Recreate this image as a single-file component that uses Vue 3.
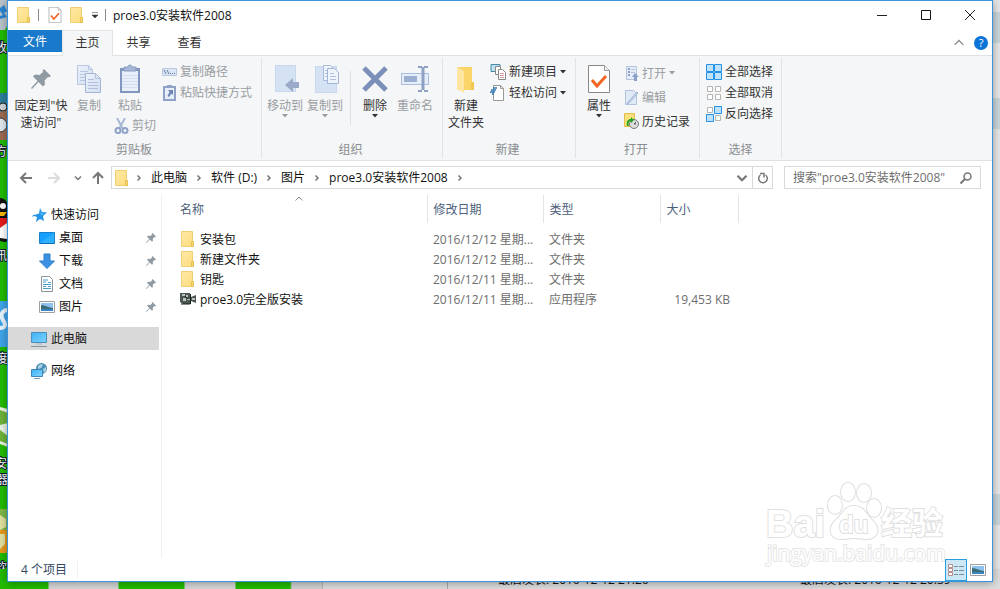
<script setup>
import { ref } from 'vue';

const tabs = ['主页', '共享', '查看'];
const activeTab = ref('主页');
const keyword = ref('');
const selectedNav = ref('此电脑');

const crumbs = ['此电脑', '软件 (D:)', '图片', 'proe3.0安装软件2008'];

const quickItems = [
  { label: '桌面', icon: 'desktop' },
  { label: '下载', icon: 'download' },
  { label: '文档', icon: 'document' },
  { label: '图片', icon: 'picture' }
];

const rootItems = [
  { label: '此电脑', icon: 'computer' },
  { label: '网络', icon: 'network' }
];

const files = [
  { name: '安装包', date: '2016/12/12 星期一 20:11', type: '文件夹', size: '', icon: 'folder' },
  { name: '新建文件夹', date: '2016/12/12 星期一 20:15', type: '文件夹', size: '', icon: 'folder' },
  { name: '钥匙', date: '2016/12/11 星期日 19:40', type: '文件夹', size: '', icon: 'folder' },
  { name: 'proe3.0完全版安装', date: '2016/12/11 星期日 19:52', type: '应用程序', size: '19,453 KB', icon: 'app' }
];
</script>

<template>
  <div class="desktop">
    <!-- 图标库 -->
    <svg class="sprite" width="0" height="0" aria-hidden="true">
      <defs>
        <linearGradient id="g-folder" x1="0" y1="0" x2="1" y2="1">
          <stop offset="0" stop-color="#ffe9a6" />
          <stop offset="1" stop-color="#fcdc7c" />
        </linearGradient>
        <linearGradient id="g-screen" x1="0" y1="0" x2="1" y2="1">
          <stop offset="0" stop-color="#3fb0f5" />
          <stop offset="1" stop-color="#7dd4ff" />
        </linearGradient>
        <linearGradient id="g-page" x1="0" y1="0" x2="1" y2="1">
          <stop offset="0" stop-color="#eaf1fa" />
          <stop offset="1" stop-color="#d3dff0" />
        </linearGradient>
      </defs>
      <symbol id="i-folder" viewBox="0 0 16 16">
        <path d="M1.500.5h11v10h1v5h-12z" fill="url(#g-folder)" stroke="#efcf72" />
        <path d="M11.500 15.500v-5h2v5z" fill="#f8d774" stroke="#e6c052" />
      </symbol>
      <symbol id="i-check" viewBox="0 0 22 28">
        <path d="M.5.5h16l5 5v22H.5z" fill="#fff" stroke="#888" />
        <path d="M16.500.5v5h5" fill="#eee" stroke="#999" />
        <path d="M4 15l5 6 9-10" fill="none" stroke="#f26522" stroke-width="3" />
      </symbol>
      <symbol id="i-pin" viewBox="0 0 20 20">
        <path d="M13 0l7 7-1.500 1.300-1.500-.3-3.500 3.500.5 4-2 2-4.500-4.500L1 20l-1-1 6.500-7L2 7.500l2-2 4.500.5L12 3l-.5-1.500z" fill="#8f9aa3" />
      </symbol>
      <symbol id="i-desktop" viewBox="0 0 16 16">
        <path d="M.5 2.500h15v11H.5z" fill="#16a0ff" stroke="#1b80cc" />
        <path d="M1 13L15 3v10z" fill="#2fb0ff" />
        <path d="M1 13.500h14" stroke="#0f6bb3" />
      </symbol>
      <symbol id="i-download" viewBox="0 0 16 16">
        <path d="M5 1h6v7h4.500L8 15.500.5 8H5z" fill="#3c92e2" stroke="#2c7ccb" />
      </symbol>
      <symbol id="i-document" viewBox="0 0 16 16">
        <path d="M2.500.5h8l3 3v12h-11z" fill="#fff" stroke="#8c959c" />
        <path d="M4 4h5M4 6h3M9 6.500h3M4 8.500h8M4 10.500h3M9 10.500h3M4 12.500h8" stroke="#4a9dc9" />
      </symbol>
      <symbol id="i-picture" viewBox="0 0 16 16">
        <path d="M.5 2.500h15v11H.5z" fill="#fff" stroke="#9a9fa4" />
        <path d="M2 4h12v8H2z" fill="#8fc1ef" />
        <path d="M2 6c4 0 8 3 12 3v3H2z" fill="#3c6c73" />
        <path d="M2 10h12v2H2z" fill="#3b84c4" />
      </symbol>
      <symbol id="i-computer" viewBox="0 0 16 16">
        <path d="M.5 1.500h15v10H.5z" fill="url(#g-screen)" stroke="#4a8fbd" />
        <path d="M5 13h6" stroke="#9fb5c4" />
        <path d="M0 15.500h16" stroke="#8197a8" />
      </symbol>
      <symbol id="i-network" viewBox="0 0 16 16">
        <circle cx="10.500" cy="5.500" r="5.500" fill="#4b8fb5" />
        <path d="M7 3c2-2 4-2 5-1l-2 3-3 1zM12 6l3-2v4l-2 2z" fill="#a9d3e4" />
        <path d="M.5 6.500h11v7H.5z" fill="url(#g-screen)" stroke="#3d86b5" />
        <path d="M3 15.500h6" stroke="#7d98a8" />
      </symbol>
      <symbol id="i-app" viewBox="0 0 16 16">
        <path d="M0 2h10v3l1-1v2l5-2v8l-5-2v3H3l-3-2z" fill="#4d5650" />
        <path d="M2 3h3v2H2zM6 4h2v2H6zM3 7h3v3H3zM7 8h3v1H7zM12 7h3v2h-3z" fill="#b7c4b9" />
        <path d="M1 13h9M10.500 3v10M5 5l3 3" stroke="#16201a" />
      </symbol>
      <symbol id="i-copy" viewBox="0 0 24 28">
        <path d="M.5.5h11l4 4v15H.5z" fill="url(#g-page)" stroke="#b9c7e1" />
        <path d="M11.500.5v4h4M3 6.500h8M3 9.500h9M3 12.500h5M3 15.500h5" fill="none" stroke="#b9c7e1" />
        <path d="M8.500 8.500h10l5 5v14h-15z" fill="url(#g-page)" stroke="#a3b5d6" />
        <path d="M18.500 8.500v5h5M11 14.500h6M11 17.500h10M11 20.500h10M11 23.500h10" fill="none" stroke="#b0c0de" />
      </symbol>
      <symbol id="i-paste" viewBox="0 0 22 30">
        <path d="M1 4h20v25H1z" fill="#8296bf" />
        <path d="M3 7h16v20H3z" fill="#e8eff9" />
        <path d="M3 11.500h16M3 14.500h16M3 17.500h16M3 20.500h16M3 23.500h16" stroke="#d3dff0" />
        <path d="M5 3h4a2 2 0 0 1 4 0h4v4H5z" fill="#a7b8d6" stroke="#899cc3" />
      </symbol>
      <symbol id="i-cut" viewBox="0 0 16 16">
        <path d="M4 0l6 11M12 0L6 11" stroke="#a9b8d2" stroke-width="2" />
        <circle cx="5" cy="12.500" r="2.500" fill="none" stroke="#8ea3c9" stroke-width="2" />
        <circle cx="12" cy="12.500" r="2.500" fill="none" stroke="#8ea3c9" stroke-width="2" />
      </symbol>
      <symbol id="i-path" viewBox="0 0 16 16">
        <path d="M1.500 4.500h14v7h-14z" fill="#dbe6f4" stroke="#b9c8df" />
        <path d="M3 6l2 4M6 6l2 4M9 9.500h1M11 9.500h1M13 9.500h1" stroke="#6478a3" />
      </symbol>
      <symbol id="i-shortcut" viewBox="0 0 16 16">
        <path d="M3 2h11v13H3z" fill="#e6eef8" stroke="#8fa1c6" stroke-width="2" />
        <path d="M6 0h5v3H6z" fill="#8fa1c4" />
        <path d="M7 5h5v5l-1.500-1.500L8 12l-1.500-1 2-4z" fill="#6c83b4" />
      </symbol>
      <symbol id="i-move" viewBox="0 0 28 28">
        <path d="M4 0h21v27H4z" fill="#c9d8ee" />
        <path d="M5 1h19v25H5z" fill="#d5e2f3" />
        <path d="M14 20l8-7v4h6v6h-6v4z" fill="#9aabc9" />
      </symbol>
      <symbol id="i-copyto" viewBox="0 0 28 28">
        <path d="M4 1h22v27H4z" fill="#c9d8ee" />
        <path d="M5 2h20v25H5z" fill="#d5e2f3" />
        <path d="M12.500.5h7l3 3v12h-10z" fill="#eef4fb" stroke="#a9badb" />
        <path d="M16.500 3.500h7l4 4v11h-11z" fill="#eef4fb" stroke="#a3b5d6" />
        <path d="M14 5.500h2M14 8.500h2M14 11.500h2M19 8.500h4M19 11.500h6M19 14.500h6" stroke="#b0c0de" />
      </symbol>
      <symbol id="i-delete" viewBox="0 0 26 26">
        <path d="M2 2l22 22M24 2L2 24" stroke="#7a90b8" stroke-width="5" />
      </symbol>
      <symbol id="i-rename" viewBox="0 0 28 28">
        <path d="M.5 8.500h27v11H.5z" fill="#e6eefa" stroke="#a9bcdc" />
        <path d="M3 11h13v6H3z" fill="#9aafd2" />
        <path d="M22 2v23" stroke="#8ea1c5" stroke-width="3" />
        <path d="M17 2h4M23 2h4M17 26h4M23 26h4" stroke="#8ea1c5" stroke-width="2" />
      </symbol>
      <symbol id="i-newfolder" viewBox="0 0 20 28">
        <path d="M1 2h15v16h1v7H1z" fill="#f9d56a" />
        <path d="M15 17h3v8h-3z" fill="#f3c64f" />
        <path d="M1 2l7 4v22l-7-4z" fill="#ffe7a3" />
      </symbol>
      <symbol id="i-newitem" viewBox="0 0 16 16">
        <path d="M1 .5h9v7H1z" fill="#bfe1f0" stroke="#4788a5" />
        <path d="M5.500 2.500h5v8h-5z" fill="#fff" stroke="#888" />
        <path d="M8.500 5.500h4l3 3v7h-7z" fill="#fff" stroke="#888" />
        <path d="M10 9.500h4M10 11.500h4M10 13.500h4" stroke="#d59a9a" />
      </symbol>
      <symbol id="i-access" viewBox="0 0 16 16">
        <path d="M3.500.5h7l3 3v12h-10z" fill="#fff" stroke="#999" />
        <path d="M10.500.5v3h3" fill="none" stroke="#999" />
        <path d="M3 3h4M1 5h5M0 7h5M2 9h2" stroke="#2f78b5" stroke-width="1.500" />
      </symbol>
      <symbol id="i-open" viewBox="0 0 16 16">
        <path d="M3.500 1.500h10v13h-10z" fill="#e6edf8" stroke="#b3c2dd" />
        <path d="M5 4h2M5 7h2M5 10h2" stroke="#8ba0c8" stroke-width="2" />
        <path d="M8 4.500h4M8 7.500h4" stroke="#b3c2dd" />
        <path d="M12 8l4 4h-2v4h-3v-4H9z" fill="#8ba0c8" />
      </symbol>
      <symbol id="i-edit" viewBox="0 0 16 16">
        <path d="M2.500 1.500h8l3 3v11h-11z" fill="#e0e9f6" stroke="#b3c2dd" />
        <path d="M15 4L6 14l-2 1 1-2 9-10z" fill="#cad8ec" stroke="#a3b5d6" />
      </symbol>
      <symbol id="i-history" viewBox="0 0 16 16">
        <path d="M1.500.5h10v13h-10z" fill="#fbe17e" stroke="#e3bf4a" />
        <circle cx="11" cy="11" r="4.500" fill="#ddd" stroke="#777" />
        <path d="M11 11l2-2M11 11h2" stroke="#555" />
        <path d="M4 13c-1-5 1-7 4-7V4l3 3-3 3V8c-2 0-3 2-2 5z" fill="#21a421" />
      </symbol>
      <symbol id="i-all" viewBox="0 0 16 16">
        <path d="M.5.5h7v7h-7zM8.500.5h7v7h-7zM.5 8.500h7v7h-7zM8.500 8.500h7v7h-7z" fill="#bfe2fb" stroke="#2491e6" />
      </symbol>
      <symbol id="i-none" viewBox="0 0 16 16">
        <path d="M1.500 1.500h5v5h-5zM9.500 1.500h5v5h-5zM1.500 9.500h5v5h-5zM9.500 9.500h5v5h-5z" fill="#fff" stroke="#b5b5b5" />
      </symbol>
      <symbol id="i-invert" viewBox="0 0 16 16">
        <path d="M1.500 1.500h5v5h-5zM9.500 9.500h5v5h-5z" fill="#fff" stroke="#b5b5b5" />
        <path d="M8.500.5h7v7h-7zM.5 8.500h7v7h-7z" fill="#bfe2fb" stroke="#2491e6" />
      </symbol>
      <symbol id="i-chevron" viewBox="0 0 8 8">
        <path d="M2.500 1.500l2.500 2.500-2.500 2.500" fill="none" stroke="#777" stroke-width="1.500" />
      </symbol>
      <symbol id="i-down" viewBox="0 0 8 8">
        <path d="M1 2.500l3 3 3-3" fill="none" stroke="#777" stroke-width="1.500" />
      </symbol>
      <symbol id="i-up" viewBox="0 0 8 8">
        <path d="M.5 5.500L4 2l3.500 3.500" fill="none" stroke="#8a8a8a" />
      </symbol>
      <symbol id="i-tri" viewBox="0 0 6 4">
        <path d="M0 0h6L3 3.500z" fill="currentColor" />
      </symbol>
    </svg>

    <!-- 窗口后面露出的桌面 -->
    <svg class="icons-behind" width="8" height="589" aria-hidden="true">
      <path d="M0 0h8v24l-3 6H0z" fill="#b9c3c9" />
      <path d="M0 8l4-3 3 6-3 2 3 4-7 2v-3l3-1-3-4z" fill="#2b87d2" />
      <path d="M0 93h8v47H0z" fill="#2c7f99" />
      <path d="M0 112l8-4v32H0z" fill="#9c6b52" />
      <circle cx="3" cy="107" r="4" fill="#cfd6da" stroke="#222" />
      <circle cx="0" cy="125" r="7" fill="#dfe8ee" stroke="#333" />
      <path d="M0 198c5 0 8 4 8 9v34c-4 2-6 0-8 0z" fill="#111" />
      <circle cx="3" cy="206" r="3" fill="#fff" />
      <path d="M0 212h7l-3 4H0z" fill="#f4b400" />
      <path d="M0 218h8v10H0z" fill="#e31b1b" />
      <path d="M0 228l7-5v16l-7-1z" fill="#fff" />
      <path d="M0 301h8v46H0z" fill="#3fa5e8" />
      <path d="M8 310c-6 0-8 5-5 10 3 4 3 8-3 8" fill="none" stroke="#e8f4fc" stroke-width="4" />
      <path d="M0 407l8 2v38l-8-3z" fill="#e9f3e4" />
      <path d="M0 410l8 3v10l-8 2zM0 430l8 6v8l-8-3z" fill="#6db33a" />
      <path d="M0 509h8v21H0z" fill="#7cb648" />
      <path d="M0 530h8v23H0z" fill="#e69a1c" />
      <path d="M0 515l6 4v8l-6 3zM0 534h5v10l-5 5z" fill="#dfe0a0" />
      <g class="behind-label">
        <text x="-5" y="52">收</text>
        <text x="-5" y="156">方</text>
        <text x="-5" y="260">讯</text>
        <text x="-4" y="363">度</text>
        <text x="-5" y="468">安</text>
        <text x="-4" y="484">器</text>
        <text x="-5" y="572">软件</text>
      </g>
    </svg>
    <div class="page-behind"></div>
    <div class="bottom-behind">
      <span>最后发表: 2016-12-12 21:26</span>
      <span>最后发表: 2016-12-12 20:39</span>
    </div>

    <main class="window">
      <header class="titlebar">
        <div class="quickbar">
          <svg class="ic16"><use href="#i-folder" /></svg>
          <i class="bar"></i>
          <button class="plain" aria-label="属性"><svg class="ic16"><use href="#i-check" /></svg></button>
          <button class="plain" aria-label="新建文件夹"><svg class="ic16"><use href="#i-folder" /></svg></button>
          <button class="plain custom" aria-label="自定义快速访问工具栏">
            <svg width="8" height="8"><path d="M1 1.500h6M1 4h6L4 7z" fill="#333" stroke="#333" stroke-width=".5" /></svg>
          </button>
          <i class="bar"></i>
        </div>
        <h1>proe3.0安装软件2008</h1>
        <div class="controls">
          <button class="plain" aria-label="最小化"><svg width="12" height="12"><path d="M1 6.500h10" stroke="#222" /></svg></button>
          <button class="plain" aria-label="最大化"><svg width="12" height="12"><path d="M1.500 1.500h9v9h-9z" fill="none" stroke="#111" /></svg></button>
          <button class="plain" aria-label="关闭"><svg width="12" height="12"><path d="M1 1l10 10M11 1L1 11" stroke="#222" /></svg></button>
        </div>
      </header>

      <nav class="tabs">
        <button class="file-tab">文件</button>
        <button
          v-for="tab in tabs"
          :key="tab"
          class="tab"
          :class="{ active: activeTab === tab }"
          @click="activeTab = tab"
        >{{ tab }}</button>
        <div class="tabs-right">
          <button class="plain" aria-label="最小化功能区"><svg width="10" height="10"><use href="#i-up" /></svg></button>
          <button class="help" aria-label="帮助">?</button>
        </div>
      </nav>

      <section class="ribbon">
        <div class="group clipboard">
          <div class="group-body">
            <button class="big pin-big">
              <span class="big-icon"><svg width="20" height="20"><use href="#i-pin" /></svg></span>
              <span>固定到"快<br>速访问"</span>
            </button>
            <button class="big copy-big off">
              <span class="big-icon"><svg width="24" height="28"><use href="#i-copy" /></svg></span>
              <span>复制</span>
            </button>
            <div class="paste-col">
              <button class="big off">
                <span class="big-icon"><svg width="22" height="30"><use href="#i-paste" /></svg></span>
                <span>粘贴</span>
              </button>
              <button class="small off cut"><svg class="ic16"><use href="#i-cut" /></svg>剪切</button>
            </div>
            <div class="smalls">
              <button class="small off"><svg class="ic16"><use href="#i-path" /></svg>复制路径</button>
              <button class="small off"><svg class="ic16"><use href="#i-shortcut" /></svg>粘贴快捷方式</button>
            </div>
          </div>
          <div class="group-name">剪贴板</div>
        </div>

        <div class="group organize">
          <div class="group-body">
            <button class="big off">
              <span class="big-icon"><svg width="28" height="28"><use href="#i-move" /></svg></span>
              <span>移动到</span>
              <svg class="tri"><use href="#i-tri" /></svg>
            </button>
            <button class="big off">
              <span class="big-icon"><svg width="28" height="28"><use href="#i-copyto" /></svg></span>
              <span>复制到</span>
              <svg class="tri"><use href="#i-tri" /></svg>
            </button>
            <i class="divider"></i>
            <button class="big">
              <span class="big-icon"><svg width="26" height="26"><use href="#i-delete" /></svg></span>
              <span>删除</span>
              <svg class="tri"><use href="#i-tri" /></svg>
            </button>
            <button class="big off">
              <span class="big-icon"><svg width="28" height="28"><use href="#i-rename" /></svg></span>
              <span>重命名</span>
            </button>
          </div>
          <div class="group-name">组织</div>
        </div>

        <div class="group create">
          <div class="group-body">
            <button class="big">
              <span class="big-icon"><svg width="20" height="28"><use href="#i-newfolder" /></svg></span>
              <span>新建<br>文件夹</span>
            </button>
            <div class="smalls">
              <button class="small"><svg class="ic16"><use href="#i-newitem" /></svg>新建项目<svg class="tri"><use href="#i-tri" /></svg></button>
              <button class="small"><svg class="ic16"><use href="#i-access" /></svg>轻松访问<svg class="tri"><use href="#i-tri" /></svg></button>
            </div>
          </div>
          <div class="group-name">新建</div>
        </div>

        <div class="group open">
          <div class="group-body">
            <button class="big">
              <span class="big-icon"><svg width="22" height="28"><use href="#i-check" /></svg></span>
              <span>属性</span>
              <svg class="tri"><use href="#i-tri" /></svg>
            </button>
            <div class="smalls loose">
              <button class="small off"><svg class="ic16"><use href="#i-open" /></svg>打开<svg class="tri"><use href="#i-tri" /></svg></button>
              <button class="small off"><svg class="ic16"><use href="#i-edit" /></svg>编辑</button>
              <button class="small"><svg class="ic16"><use href="#i-history" /></svg>历史记录</button>
            </div>
          </div>
          <div class="group-name">打开</div>
        </div>

        <div class="group select">
          <div class="group-body">
            <div class="smalls">
              <button class="small"><svg class="ic16"><use href="#i-all" /></svg>全部选择</button>
              <button class="small"><svg class="ic16"><use href="#i-none" /></svg>全部取消</button>
              <button class="small"><svg class="ic16"><use href="#i-invert" /></svg>反向选择</button>
            </div>
          </div>
          <div class="group-name">选择</div>
        </div>
      </section>

      <div class="addressbar">
        <button class="plain nav-btn" aria-label="后退">
          <svg width="14" height="14"><path d="M13 7H2M7 2L2 7l5 5" fill="none" stroke="#777" stroke-width="2" /></svg>
        </button>
        <button class="plain nav-btn" aria-label="前进">
          <svg width="14" height="14"><path d="M1 7h11M7 2l5 5-5 5" fill="none" stroke="#dcdcdc" stroke-width="2" /></svg>
        </button>
        <button class="plain nav-btn narrow" aria-label="最近浏览的位置"><svg width="8" height="8"><use href="#i-down" /></svg></button>
        <button class="plain nav-btn narrow" aria-label="上移">
          <svg width="14" height="14"><path d="M7 13V2M2 7l5-5 5 5" fill="none" stroke="#777" stroke-width="2" /></svg>
        </button>
        <div class="path">
          <svg class="ic16"><use href="#i-folder" /></svg>
          <svg class="chev"><use href="#i-chevron" /></svg>
          <template v-for="crumb in crumbs" :key="crumb">
            <a href="#">{{ crumb }}</a>
            <svg class="chev"><use href="#i-chevron" /></svg>
          </template>
          <button class="plain path-drop" aria-label="以前的位置"><svg width="12" height="12"><use href="#i-down" /></svg></button>
          <button class="plain refresh" aria-label="刷新">
            <svg width="12" height="12"><path d="M3.500 3a4.300 4.300 0 1 0 5 0M3 1.500h4v4" fill="none" stroke="#777" stroke-width="1.500" /></svg>
          </button>
        </div>
        <label class="search">
          <input v-model="keyword" type="text" aria-label="搜索" placeholder="搜索&quot;proe3.0安装软件2008&quot;">
          <svg width="12" height="12"><circle cx="7.500" cy="4.500" r="3.500" fill="none" stroke="#777" stroke-width="1.500" /><path d="M5 7l-4.500 4.500" stroke="#777" stroke-width="2" /></svg>
        </label>
      </div>

      <div class="content">
        <aside class="sidebar">
          <a href="#" class="nav-row root">
            <svg class="ic16" viewBox="0 0 16 16"><path d="M9 1l2 4 5 .5-4 3.500 1 5-4-2-4 3 1-5-3-1-2 1 1-2 3-.5 3-1z" fill="#2496e8" /><path d="M9 3l1 3 3 .5-3 2z" fill="#5cc0fa" /></svg>
            快速访问
          </a>
          <a v-for="item in quickItems" :key="item.label" href="#" class="nav-row child">
            <svg class="ic16"><use :href="'#i-' + item.icon" /></svg>
            {{ item.label }}
            <svg class="pinned"><use href="#i-pin" /></svg>
          </a>
          <a
            v-for="item in rootItems"
            :key="item.label"
            href="#"
            class="nav-row root spaced"
            :class="{ selected: selectedNav === item.label }"
            @click.prevent="selectedNav = item.label"
          >
            <svg class="ic16"><use :href="'#i-' + item.icon" /></svg>
            {{ item.label }}
          </a>
        </aside>

        <div class="list">
          <table>
            <colgroup>
              <col class="c-name"><col class="c-date"><col class="c-type"><col class="c-size">
            </colgroup>
            <thead>
              <tr>
                <th>名称<svg class="sort"><use href="#i-up" /></svg></th>
                <th>修改日期</th>
                <th>类型</th>
                <th>大小</th>
              </tr>
            </thead>
            <tbody>
              <tr v-for="file in files" :key="file.name">
                <td><span class="file"><svg class="ic16"><use :href="'#i-' + file.icon" /></svg>{{ file.name }}</span></td>
                <td>{{ file.date.slice(0, 13) }}...</td>
                <td>{{ file.type }}</td>
                <td>{{ file.size }}</td>
              </tr>
            </tbody>
          </table>
        </div>

        <svg class="watermark" width="184" height="90">
          <g class="mark">
            <ellipse cx="74" cy="24" rx="7" ry="9" />
            <ellipse cx="87" cy="11" rx="7" ry="9" />
            <ellipse cx="103" cy="12" rx="7" ry="9" />
            <ellipse cx="113" cy="27" rx="7" ry="9" />
            <path d="M93 25c10 0 12 8 18 14 10 10 5 19-5 19-6 0-8-1-13-1s-7 1-13 1c-11 0-14-11-5-19 7-6 8-14 18-14z" />
            <text x="5" y="56" class="latin" font-size="38">Bai</text>
            <text x="78" y="52" class="latin" font-size="24">du</text>
            <text x="120" y="53" class="cjk" font-size="31">经验</text>
            <text x="6" y="80" class="url" font-size="21">jingyan.baidu.com</text>
          </g>
        </svg>
      </div>

      <footer class="status">
        <span class="count">4 个项目</span>
        <div class="views">
          <button class="view on" aria-label="详细信息">
            <svg width="16" height="14"><path d="M.5 1.500h4v3h-4zM.5 5.500h4v3h-4zM.5 9.500h4v3h-4z" fill="#fff" stroke="#b78d8d" /><path d="M6 3.500h4M11 3.500h5M6 7.500h4M11 7.500h5M6 11.500h4M11 11.500h5" stroke="#7d8b92" /></svg>
          </button>
          <button class="view" aria-label="大图标"><svg class="ic16"><use href="#i-picture" /></svg></button>
        </div>
      </footer>
    </main>
  </div>
</template>

<style>
body {
  background: #22bb00;
}
</style>

<style scoped>
.desktop,
.desktop * {
  box-sizing: border-box;
}

.desktop {
  position: relative;
  display: flex;
  min-height: 100vh;
  padding: 0 7px 7px;
  overflow: hidden;
  font-family: "Open Sans", "Noto Sans CJK SC", sans-serif;
  font-size: 12px;
  line-height: 17px;
  color: #111;
}

.desktop svg {
  flex: none;
  display: block;
}

.desktop .sprite {
  position: absolute;
}

.icons-behind {
  position: absolute;
  left: 0;
  top: 0;
}

.behind-label {
  fill: #fff;
  stroke: #123;
  stroke-width: 2px;
  paint-order: stroke;
}

.page-behind {
  position: absolute;
  right: 0;
  top: 0;
  bottom: 0;
  width: 20px;
  background: linear-gradient(#e6e6e6 12px, #c9d5da 12px 43px, #e6e6e6 43px 98px, #c9d5da 98px 129px, #e6e6e6 129px 494px, #c9d5da 494px 525px, #e6e6e6 525px);
}

.bottom-behind {
  position: absolute;
  left: 0;
  right: 0;
  bottom: 0;
  height: 20px;
  display: grid;
  grid-template-columns: 498px 302px 1fr;
  padding-top: 2px;
  background: linear-gradient(90deg, #22bb00 48px, #d6d6d6 49px 118px, #22bb00 119px 184px, #d6d6d6 185px 235px, #22bb00 236px 290px, #d0d0d0 292px 322px, #b5b5b5 322px 323px, #dcdcdc 323px 447px, #aaa 447px 448px, #dcdcdc 448px);
}

.bottom-behind span:first-child {
  grid-column: 2;
}

.window {
  position: relative;
  flex: 1;
  min-width: 0;
  display: flex;
  flex-direction: column;
  background: #fff;
  border: 1px solid #3c94dc;
  box-shadow: 0 1px 8px rgba(0, 0, 0, 0.35);
}

button {
  font: inherit;
  color: inherit;
  border: 0;
  padding: 0;
  background: none;
  cursor: pointer;
}

.plain {
  display: flex;
  align-items: center;
  justify-content: center;
}

a {
  color: inherit;
  text-decoration: none;
}

.ic16 {
  width: 16px;
  height: 16px;
}

.tri {
  width: 6px;
  height: 4px;
}

/* 标题栏 */
.titlebar {
  display: flex;
  align-items: center;
  height: 28px;
  margin-bottom: 1px;
  padding-left: 8px;
}

.quickbar {
  display: flex;
  align-items: center;
  gap: 6px;
}

.bar {
  width: 1px;
  height: 12px;
  background: #888;
}

.quickbar .bar {
  margin-right: 2px;
}

.custom {
  width: 8px;
}

h1 {
  flex: 1;
  margin: 0;
  padding-left: 5px;
  font-size: 12px;
  font-weight: 400;
}

.controls {
  display: flex;
}

.controls button {
  width: 44px;
  height: 28px;
}

/* 选项卡 */
.tabs {
  display: flex;
  height: 26px;
  border-bottom: 1px solid #e2e3e4;
  color: #333;
}

.file-tab {
  width: 54px;
  height: 22px;
  background: #1979ca;
  color: #fff;
}

.tab {
  width: 51px;
  height: 26px;
  border: 1px solid transparent;
  border-width: 1px 1px 0;
  padding-bottom: 2px;
}

.tab.active {
  background: #f5f6f7;
  border-color: #e2e3e4;
}

.tabs-right {
  display: flex;
  align-items: center;
  gap: 10px;
  margin-left: auto;
  padding-right: 4px;
}

.help {
  width: 14px;
  height: 14px;
  border-radius: 50%;
  background: #0b74d6;
  color: #fff;
  font-size: 11px;
  line-height: 14px;
}

/* 功能区 */
.ribbon {
  display: flex;
  height: 105px;
  background: #f5f6f7;
  border-bottom: 1px solid #dfe1e3;
  color: #333;
}

.group {
  display: flex;
  flex-direction: column;
  margin: 2px 0;
  padding: 0 0 0 3px;
  border-right: 1px solid #e2e4e6;
}

.clipboard {
  width: 254px;
  padding-left: 5px;
}

.organize {
  width: 181px;
}

.create {
  width: 133px;
}

.open {
  width: 124px;
}

.select {
  width: 82px;
  padding-left: 6px;
}

.group-body {
  flex: 1;
  display: flex;
  align-items: flex-start;
  padding-top: 3px;
}

.group-name {
  padding-right: 6px;
  text-align: center;
  color: #8a8d91;
}

.big {
  display: flex;
  flex-direction: column;
  align-items: center;
  width: 40px;
  white-space: nowrap;
}

.big-icon {
  display: flex;
  align-items: center;
  height: 36px;
}

.pin-big {
  width: 56px;
}

.off {
  color: #999da2;
}

.smalls {
  display: flex;
  flex-direction: column;
  padding-left: 4px;
}

.select .smalls {
  padding-left: 0;
}

.small {
  display: flex;
  align-items: center;
  gap: 3px;
  height: 21px;
  white-space: nowrap;
}

.loose .small {
  height: 24px;
}

.copy-big {
  margin-right: 1px;
}

.paste-col {
  width: 47px;
}

.cut {
  height: 17px;
  margin-left: 3px;
  margin-top: 3px;
}

.divider {
  width: 1px;
  height: 54px;
  margin: 10px 4px 0 5px;
  background: #dfe1e3;
}

/* 地址栏 */
.addressbar {
  display: flex;
  gap: 4px;
  padding: 5px 11px 6px 6px;
}

.nav-btn {
  width: 24px;
  height: 23px;
}

.narrow {
  width: 16px;
}

.path {
  flex: 1;
  display: flex;
  align-items: center;
  height: 23px;
  margin-left: 1px;
  padding-left: 2px;
  border: 1px solid #d9d9d9;
  white-space: nowrap;
}

.path .ic16 {
  margin-right: -3px;
}

.chev {
  width: 8px;
  height: 8px;
  margin: 0 8px;
}

.path-drop {
  width: 20px;
  height: 21px;
  margin-left: auto;
}

.refresh {
  width: 20px;
  height: 21px;
  border-left: 1px solid #d9d9d9;
}

.search {
  display: flex;
  align-items: center;
  width: 197px;
  height: 23px;
  margin-left: 7px;
  padding: 0 8px;
  border: 1px solid #d9d9d9;
}

.search input {
  flex: 1;
  min-width: 0;
  border: 0;
  padding: 0;
  outline: 0;
  background: none;
  font: inherit;
}

.search input::placeholder {
  color: #6d6d6d;
  opacity: 1;
}

/* 内容区 */
.content {
  position: relative;
  flex: 1;
  display: flex;
}

.sidebar {
  width: 154px;
  padding: 8px 2px 0 0;
  border-right: 1px solid #f0f0f0;
}

.nav-row {
  display: flex;
  align-items: center;
  gap: 4px;
  height: 23px;
  padding-left: 23px;
}

.child {
  padding-left: 31px;
}

.spaced {
  margin-top: 9px;
}

.selected {
  background: #d9d9d9;
}

.pinned {
  width: 10px;
  height: 10px;
  margin-left: auto;
  margin-right: 3px;
}

.list {
  flex: 1;
  min-width: 0;
}

table {
  table-layout: fixed;
  width: 576px;
  border-collapse: collapse;
}

.c-name {
  width: 265px;
}

.c-date {
  width: 116px;
}

.c-type {
  width: 117px;
}

.c-size {
  width: 78px;
}

th {
  position: relative;
  height: 28px;
  padding: 0 0 0 6px;
  border-right: 1px solid #e5e5e5;
  color: #4c607a;
  font-weight: 400;
  text-align: left;
}

.sort {
  position: absolute;
  left: 50%;
  top: 0;
  width: 10px;
  height: 8px;
}

td {
  height: 20px;
  padding: 0 0 0 6px;
  color: #6d6d6d;
  white-space: nowrap;
}

th:first-child,
td:first-child {
  padding-left: 18px;
}

td:first-child {
  color: #111;
}

td:last-child {
  padding-right: 8px;
  text-align: right;
}

tbody::before {
  content: "";
  display: block;
  height: 6px;
}

.file {
  display: flex;
  align-items: center;
  gap: 4px;
}

.watermark {
  position: absolute;
  right: 47px;
  bottom: -13px;
}

.mark {
  fill: #fff;
  stroke: #dfdfdf;
  stroke-width: 2px;
  paint-order: stroke;
}

.latin {
  font-family: "Liberation Sans", sans-serif;
  font-weight: 700;
}

.cjk {
  font-family: "Noto Sans CJK SC", sans-serif;
  font-weight: 700;
}

.url {
  stroke: #e6e6e6;
}

/* 状态栏 */
.status {
  display: flex;
  align-items: center;
  justify-content: space-between;
  height: 23px;
  padding-left: 13px;
  color: #33475f;
}

.count {
  padding-right: 10px;
  border-right: 1px solid #f0f0f0;
}

.views {
  position: relative;
  display: flex;
  padding-right: 3px;
}

.view {
  display: flex;
  align-items: center;
  justify-content: center;
  width: 22px;
  height: 22px;
}

.view.on {
  background: #cce8f6;
  border: 1px solid #26a0da;
}
</style>
